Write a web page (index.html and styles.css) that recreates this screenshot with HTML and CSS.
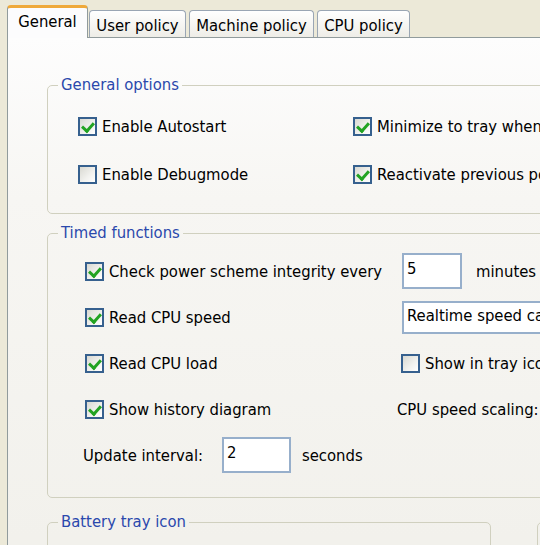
FILE: index.html
```html
<!DOCTYPE html>
<html>
<head>
<meta charset="utf-8">
<link rel="stylesheet" href="styles.css">
</head>
<body>
<div class="tabs">
  <div class="tab active w-general">General</div>
  <div class="tab w-user">User policy</div>
  <div class="tab w-machine">Machine policy</div>
  <div class="tab w-cpu">CPU policy</div>
</div>
<div class="panel">
  <fieldset class="group g-general">
    <legend>General options</legend>
    <div class="grid2">
      <label class="chk"><span class="box on"></span>Enable Autostart</label>
      <label class="chk"><span class="box on"></span>Minimize to tray when minimized</label>
      <label class="chk"><span class="box"></span>Enable Debugmode</label>
      <label class="chk"><span class="box on"></span>Reactivate previous policy</label>
    </div>
  </fieldset>

  <fieldset class="group g-timed">
    <legend>Timed functions</legend>
    <div class="trow">
      <label class="chk c1"><span class="box on"></span>Check power scheme integrity every</label>
      <div class="c2"><span class="edit e-min">5</span><span class="unit">minutes</span></div>
    </div>
    <div class="trow">
      <label class="chk c1"><span class="box on"></span>Read CPU speed</label>
      <div class="c2"><span class="edit combo">Realtime speed calculation</span></div>
    </div>
    <div class="trow">
      <label class="chk c1"><span class="box on"></span>Read CPU load</label>
      <div class="c2"><label class="chk tray"><span class="box"></span>Show in tray icon</label></div>
    </div>
    <div class="trow">
      <label class="chk c1"><span class="box on"></span>Show history diagram</label>
      <div class="c2"><span class="scaling">CPU speed scaling:</span></div>
    </div>
    <div class="trow">
      <span class="interval">Update interval:</span>
      <span class="edit e-sec">2</span>
      <span class="unit2">seconds</span>
    </div>
  </fieldset>

  <div class="bottom">
    <fieldset class="group g-battery">
      <legend>Battery tray icon</legend>
    </fieldset>
    <div class="group g-other"></div>
  </div>
</div>
</body>
</html>
```

FILE: styles.css
```css
html, body {
  margin: 0;
  padding: 0;
}
body {
  width: 540px;
  height: 545px;
  overflow: hidden;
  background: #ece9d8;
  font-family: "DejaVu Sans Condensed", "DejaVu Sans", sans-serif;
  font-size: 16.5px;
  color: #000;
}

/* tabs */
.tabs {
  display: flex;
  align-items: flex-end;
  height: 37px;
  box-sizing: border-box;
  padding-left: 7px;
}
.tab {
  box-sizing: border-box;
  height: 27px;
  border: 1px solid #9aa6b4;
  border-bottom: none;
  border-radius: 4px 4px 0 0;
  background: linear-gradient(#ffffff, #eeede7);
  display: flex;
  align-items: center;
  justify-content: center;
  margin-left: 3px;
  padding-top: 2px;
  white-space: nowrap;
}
.tab.active {
  height: 33px;
  margin-left: 0;
  margin-bottom: -1px;
  position: relative;
  z-index: 1;
  background: #fcfcfd;
  border-color: #919b9c;
  border-top: 3px solid #efa93a;
  padding-top: 0;
  padding-bottom: 3px;
}
.w-general { width: 81px; }
.w-user { width: 97px; margin-left: 1px; }
.w-machine { width: 125px; }
.w-cpu { width: 93px; }

/* panel */
.panel {
  margin-left: 7px;
  width: 1000px;
  height: 508px;
  box-sizing: border-box;
  border-top: 1px solid #919b9c;
  border-left: 1px solid #919b9c;
  background: linear-gradient(#fdfdfd 0, #f7f6f3 160px, #f2f1ec 500px);
  padding-left: 39px;
  padding-top: 37px;
}

/* group boxes */
.group {
  margin: 0;
  border: 1px solid #d0d0bf;
  border-radius: 5px;
  padding: 0;
  box-sizing: border-box;
}
.group legend {
  line-height: 20px;
  padding: 0 3px;
  margin-left: 10px;
  color: #2a48ac;
  white-space: nowrap;
}
.g-general {
  width: 600px;
  padding: 7px 0 15px 0;
}
.g-timed {
  width: 600px;
  margin-top: 9px;
  padding: 5px 0 19px 0;
}
.bottom {
  display: flex;
  align-items: flex-start;
  margin-top: 14px;
}
.g-battery {
  flex: none;
  width: 444px;
  height: 60px;
}
.g-other {
  flex: none;
  width: 300px;
  height: 60px;
  margin-left: 46px;
  margin-top: 10px;
}

/* checkbox */
.chk {
  display: flex;
  align-items: center;
  white-space: nowrap;
}
.box {
  width: 19px;
  height: 19px;
  box-sizing: border-box;
  border: 2px solid #36608e;
  background: linear-gradient(135deg, #d9d9d2 0%, #f2f2ef 60%, #ffffff 100%);
  margin-right: 5px;
  flex: none;
  position: relative;
}
.box.on::after {
  content: "";
  position: absolute;
  left: 4px;
  top: 1px;
  width: 5px;
  height: 9px;
  border: solid #22a322;
  border-width: 0 3px 3px 0;
  transform: rotate(42deg);
}

.grid2 {
  display: grid;
  grid-template-columns: 275px auto;
  grid-auto-rows: 48px;
  align-items: center;
  margin-left: 30px;
}

.trow {
  display: flex;
  align-items: center;
  height: 46px;
}
.c1 {
  width: 317px;
  margin-left: 37px;
  flex: none;
}
.c2 {
  display: flex;
  align-items: center;
}
.edit {
  box-sizing: border-box;
  border: 2px solid #97afcb;
  background: #fff;
  height: 36px;
  padding: 4px 0 0 3px;
  display: inline-block;
  white-space: nowrap;
}
.e-min { width: 60px; }
.unit { margin-left: 14px; }
.combo {
  width: 220px;
  height: 33px;
  padding-top: 3px;
}
.tray { margin-left: -1px; }
.scaling { margin-left: -5px; }
.interval {
  margin-left: 35px;
  width: 139px;
  flex: none;
}
.e-sec { width: 69px; }
.unit2 { margin-left: 11px; }
```
